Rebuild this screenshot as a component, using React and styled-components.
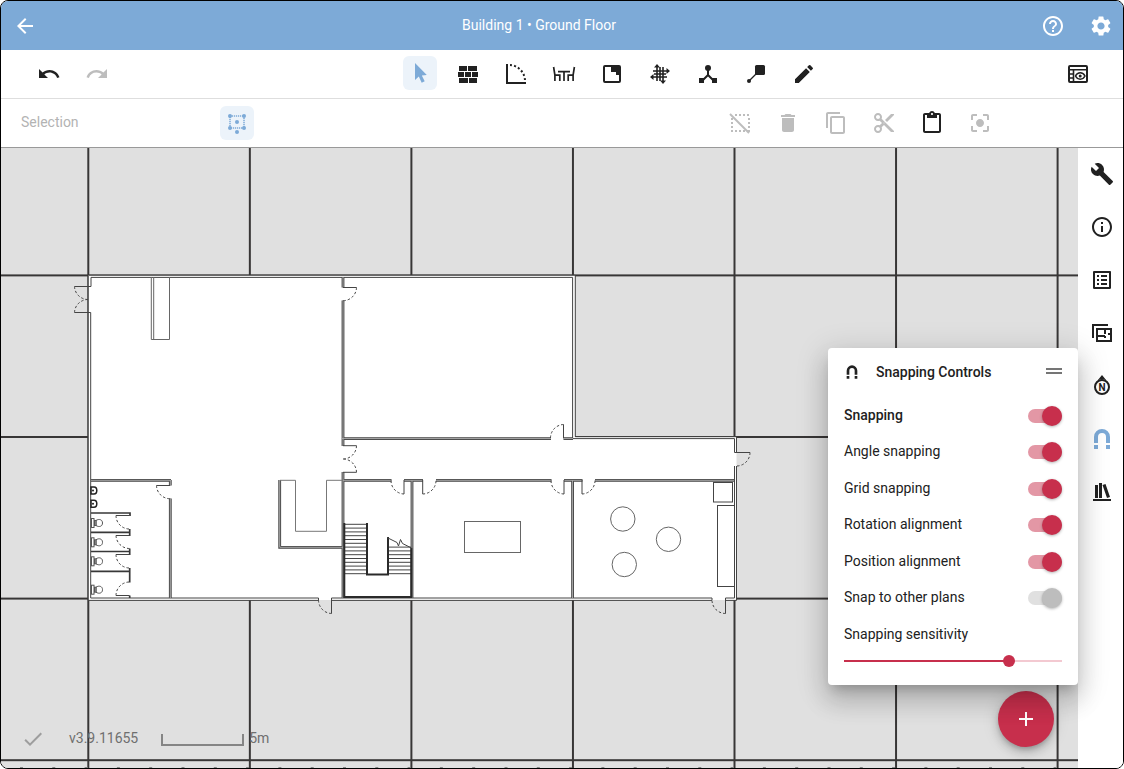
import React, { useState } from 'react';
import styled, { createGlobalStyle } from 'styled-components';
import {
	MdAdd,
	MdArrowBack,
	MdBuild,
	MdCenterFocusStrong,
	MdCheck,
	MdContentCopy,
	MdContentCut,
	MdContentPaste,
	MdCreate,
	MdDelete,
	MdDragHandle,
	MdHelpOutline,
	MdInfoOutline,
	MdListAlt,
	MdRedo,
	MdSettings,
	MdUndo,
} from 'react-icons/md';

const BLUE = '#7daad7';
const RED = '#c72f4c';
const INK = '#212121';

const GlobalStyle = createGlobalStyle`
	* {
		box-sizing: border-box;
	}
	body {
		margin: 0;
		background: white;
		color: ${INK};
		font-family: Roboto, 'Liberation Sans', sans-serif;
		font-size: 14px;
	}
	button {
		font: inherit;
		border: 0;
		padding: 0;
		background: none;
		color: inherit;
	}
`;

const Frame = styled.div`
	display: flex;
	flex-direction: column;
	height: 100vh;
	border: 1px solid black;
	border-radius: 8px;
	overflow: hidden;
`;

const Header = styled.header`
	display: flex;
	align-items: center;
	gap: 4px;
	height: 49px;
	padding-left: 2px;
	flex: none;
	background: ${BLUE};
	color: white;
	&& > h1 {
		flex: 1;
		margin: 0;
		padding-bottom: 1px;
		text-align: center;
		font-size: 14px;
		font-weight: 400;
	}
`;

const HeaderButton = styled.button`
	display: grid;
	place-items: center;
	width: 44px;
	height: 48px;
`;

const Toolbar = styled.div`
	display: flex;
	align-items: center;
	justify-content: space-between;
	flex: none;
	height: 49px;
	padding: 0 28px 2px 31px;
	border-bottom: 1px solid #dedede;
`;

const SelectionBar = styled(Toolbar)`
	padding: 0 126px 0 20px;
	border-bottom-color: #999;
	&& > span {
		width: 199px;
		color: #b3b3b3;
		padding-bottom: 2px;
	}
	&& > div {
		margin-left: auto;
	}
`;

const ToolGroup = styled.div`
	display: flex;
	gap: 14px;
	min-width: ${(props) => (props.$wide ? '130px' : '0')};
`;

const ToolButton = styled.button`
	display: grid;
	place-items: center;
	width: 34px;
	height: 34px;
	padding-top: ${(props) => (props.$low ? '2px' : '0')};
	border-radius: 6px;
	color: ${(props) => (props.$active ? BLUE : INK)};
	background: ${(props) => (props.$active ? '#ecf3fa' : 'none')};
	&:disabled {
		color: #bdbdbd;
	}
`;

const Workspace = styled.main`
	display: flex;
	flex: 1;
	min-height: 0;
`;

const Canvas = styled.section`
	position: relative;
	z-index: 1;
	flex: 1;
	background: #e0e0e0;
	&& > svg {
		position: absolute;
		inset: 0;
		width: 100%;
		height: 100%;
	}
`;

const SideBar = styled.nav`
	display: flex;
	flex-direction: column;
	width: 45px;
	background: white;
`;

const SideButton = styled.button`
	display: grid;
	place-items: center;
	height: 53px;
	padding: 0 0 2px 3px;
	color: ${(props) => (props.$active ? BLUE : INK)};
`;

const StatusLine = styled.div`
	position: absolute;
	left: 20px;
	bottom: 17px;
	display: flex;
	align-items: center;
	height: 24px;
	color: #6f6f6f;
	&& > svg {
		color: #9e9e9e;
		margin-right: 24px;
	}
	&& > span {
		padding-bottom: 2px;
	}
`;

const ScaleBar = styled.div`
	width: 83px;
	height: 12px;
	margin: 2px 5px 0 23px;
	border: 2px solid #858585;
	border-top: 0;
`;

const AddButton = styled.button`
	position: absolute;
	right: 24px;
	bottom: 21px;
	display: grid;
	place-items: center;
	width: 56px;
	height: 56px;
	border-radius: 50%;
	background: ${RED};
	color: white;
	box-shadow: 0 3px 5px -1px rgba(0, 0, 0, 0.2),
		0 6px 10px rgba(0, 0, 0, 0.14), 0 1px 18px rgba(0, 0, 0, 0.12);
`;

const Panel = styled.aside`
	position: absolute;
	right: 0;
	bottom: 83px;
	width: 250px;
	padding: 0 16px 16px;
	border-radius: 4px;
	background: white;
	box-shadow: 0 8px 10px -5px rgba(0, 0, 0, 0.2),
		0 16px 24px 2px rgba(0, 0, 0, 0.14), 0 6px 30px 5px rgba(0, 0, 0, 0.12);
`;

const PanelHeader = styled.div`
	display: flex;
	align-items: center;
	height: 49px;
	padding-bottom: 1px;
	&& > h2 {
		flex: 1;
		margin: 0 0 0 16px;
		font-size: 14px;
		font-weight: 500;
	}
	&& > button {
		height: 24px;
		width: 24px;
		margin: 0 -4px 2px 0;
		color: #757575;
	}
`;

const SwitchList = styled.div`
	display: grid;
	grid-auto-rows: 1fr;
	height: 219px;
`;

const SwitchRow = styled.label`
	display: flex;
	align-items: center;
	justify-content: space-between;
	font-weight: ${(props) => (props.$strong ? 500 : 400)};
	&& > span {
		padding-bottom: 1px;
	}
`;

const Switch = styled.input`
	appearance: none;
	display: flex;
	align-items: center;
	justify-content: flex-end;
	width: 34px;
	height: 14px;
	margin: 1px 0 0;
	border-radius: 7px;
	background: ${(props) => (props.disabled ? '#e0e0e0' : '#e397a5')};
	&::before {
		content: '';
		flex: none;
		width: 20px;
		height: 20px;
		border-radius: 50%;
		background: ${(props) => (props.disabled ? '#bdbdbd' : RED)};
		box-shadow: 0 1px 3px rgba(0, 0, 0, 0.3);
	}
	&:not(:checked):not(:disabled) {
		justify-content: flex-start;
		background: #bdbdbd;
	}
`;

const SliderField = styled.label`
	display: flex;
	flex-direction: column;
	gap: 11px;
	padding-top: 10px;
	line-height: 16px;
`;

const Slider = styled.input`
	appearance: none;
	width: 100%;
	height: 16px;
	margin: 0;
	background: linear-gradient(${RED}, ${RED}) left center no-repeat,
		linear-gradient(#f3c9d1, #f3c9d1) center no-repeat;
	background-size: ${(props) => props.value}% 2px, 100% 2px;
	&::-webkit-slider-thumb {
		appearance: none;
		width: 12px;
		height: 12px;
		border-radius: 50%;
		background: ${RED};
	}
`;

function Icon({ children, size = 24 }) {
	return (
		<svg
			width={size}
			height={size}
			viewBox="0 0 24 24"
			fill="currentColor"
			aria-hidden="true"
		>
			{children}
		</svg>
	);
}

const line = { fill: 'none', stroke: 'currentColor', strokeWidth: 2 };

const CursorIcon = () => (
	<Icon>
		<path d="M7 1v17l3.800-3.400 2.900 6.100 3-1.400-2.900-5.800 5-.5z" />
	</Icon>
);

const WallIcon = () => (
	<Icon>
		<path d="M3 4h8v5H3zM12 4h9v5h-9zM2 10h6v5H2zM9 10h6v5H9zM16 10h6v5h-6zM3 16h9v5H3zM13 16h8v5h-8z" />
	</Icon>
);

const DoorIcon = () => (
	<Icon>
		<path d="M3 2v19h19" {...line} />
		<path d="M6 3a16 16 0 0 1 15 16" {...line} strokeDasharray="2 2.2" />
	</Icon>
);

const FurnitureIcon = () => (
	<Icon>
		<path
			d="M1.6 5l1.300 8v6M3 13.200h4.800V19M22.400 5l-1.300 8v6M21 13.200h-4.800V19M6 9.700h12M12 10v9"
			{...line}
			strokeWidth="1.7"
		/>
	</Icon>
);

const RoomIcon = () => (
	<Icon>
		<rect x="4" y="4" width="16" height="16" rx="1" {...line} />
		<path d="M11 4h9v9h-4v-3h-5z" />
	</Icon>
);

const GridIcon = () => (
	<Icon>
		<path
			d="M9 4v15M15 5v15M5 9h15M4 15h15M6 12h12M12 5v14"
			{...line}
			strokeWidth="1.6"
		/>
		<path d="M9 2l3 3.500H6zM15 22l-3-3.500h6zM22 9l-3.500-3v6zM2 15l3.500-3v6z" />
	</Icon>
);

const NetworkIcon = () => (
	<Icon>
		<circle cx="12" cy="6" r="3" />
		<path d="M12 8v6M12 13l-6 6M12 13l6 6" {...line} />
		<path d="M3 16h5v5H3zM16 16h5v5h-5z" />
	</Icon>
);

const LabelIcon = () => (
	<Icon>
		<rect x="11" y="3" width="10" height="10" rx="1.5" />
		<path d="M5 19l8-8" {...line} strokeWidth="1.2" />
		<circle cx="5" cy="19" r="2" />
	</Icon>
);

const TableEyeIcon = () => (
	<Icon>
		<rect x="3" y="4" width="18" height="16" rx="1" {...line} />
		<path d="M3 7.800h18M7.500 8v12M3 12h5M3 16h5" {...line} strokeWidth="1.6" />
		<path
			d="M9.500 14c2-4.200 7.500-4.200 9.500 0-2 4.200-7.500 4.200-9.500 0z"
			{...line}
			strokeWidth="1.5"
		/>
		<circle cx="14.200" cy="14" r="1.5" />
	</Icon>
);

const TransformIcon = () => (
	<Icon>
		<path
			d="M5 5h14v12H5z"
			{...line}
			strokeWidth="1.5"
			strokeDasharray="1.2 0.8"
		/>
		<circle cx="5" cy="5" r="2" />
		<circle cx="19" cy="5" r="2" />
		<circle cx="5" cy="17" r="2" />
		<circle cx="19" cy="17" r="2" />
		<circle cx="12" cy="11" r="2" />
		<circle cx="12" cy="21" r="2" />
	</Icon>
);

const DeselectIcon = () => (
	<Icon>
		<path d="M7 4h15M21 7v15M3 20h17M4 7v15" {...line} strokeDasharray="2 2" />
		<path d="M2 3l19 19" {...line} />
	</Icon>
);

const PlansIcon = () => (
	<Icon>
		<path
			d="M3 17V4h15M7 8h14v12H7zM12 14v2M7 15h8M15 8v5M15 15v2M18 13h3"
			{...line}
		/>
	</Icon>
);

const NorthIcon = () => (
	<Icon>
		<circle cx="12" cy="13" r="7" {...line} />
		<path d="M12 1l4.500 5.500a9 9 0 0 0-9 0z" />
		<text
			x="12"
			y="17"
			textAnchor="middle"
			fontFamily="Roboto, sans-serif"
			fontSize="10"
			fontWeight="700"
		>
			N
		</text>
	</Icon>
);

const MagnetIcon = ({ size }) => (
	<Icon size={size}>
		<path d="M6 16v-6a6 6 0 0 1 12 0v6" {...line} strokeWidth="4" />
		<path d="M4 18h4v4H4zM16 18h4v4h-4z" />
	</Icon>
);

const LibraryIcon = () => (
	<Icon>
		<path d="M3 19h18v2H3zM5 5h3v13H5zM9 3h3v15H9zM12.500 5l3-1 4.500 13-3 1z" />
	</Icon>
);

// Hinge side first, then the leaf end and the point where the swing meets the wall.
const doors = [
	[88, 286.5, 74.5, 286.5, 88, 299.5],
	[88, 312.5, 74.5, 312.5, 88, 299.5],
	[343, 287.5, 356.5, 287.5, 343, 300.7],
	[343, 445.7, 356.5, 445.7, 343, 459],
	[343, 472.3, 356.5, 472.3, 343, 459],
	[563.5, 438, 563.5, 424.5, 550.5, 438],
	[404, 480, 404, 494, 391, 480],
	[422.7, 480, 422.7, 494, 436, 480],
	[564, 480, 564, 494, 551, 480],
	[582, 480, 582, 494, 595, 480],
	[734.5, 452.5, 750, 452.5, 736, 466],
	[331.5, 598, 331.5, 613.5, 318.5, 600],
	[725.5, 598, 725.5, 613.5, 712, 600],
	[170, 485.5, 156.5, 485.5, 170, 498.7],
	[129.5, 515.5, 116, 515.5, 129.5, 529],
	[129.5, 535.5, 116, 535.5, 129.5, 548.5],
	[129.5, 554.5, 116, 554.5, 129.5, 568],
	[129.5, 595.5, 116, 595.5, 129.5, 582],
];

const walls =
	'M343 277V287.5M343 300.5V446M343 472V598M342 438.6H551M563.5 438.6H573' +
	'M343 480.3H391.5M404 480.3H423M436 480.3H551.5M564 480.3H582.5M595 480.3H734' +
	'M412 480V598M572.6 480V598M91 480.3H171M170.3 480V485.5M170.3 498.5V598' +
	'M279.7 480V547.3H343';

const stalls =
	'M91 513H130V516M91 532.3H130M91 551.5H130M91 571.3H129.7V582.5' +
	'M129.7 529V536M129.7 548.5V555M129.7 568V571M129.7 595.5V598';

function Door({ points: [hx, hy, lx, ly, wx, wy] }) {
	const sweep = (lx - hx) * (wy - hy) - (ly - hy) * (wx - hx) > 0 ? 1 : 0;
	return (
		<>
			<path d={`M${hx} ${hy}L${lx} ${ly}`} />
			<path
				d={`M${lx} ${ly}A13.5 13.5 0 0 ${sweep} ${wx} ${wy}`}
				strokeDasharray="2.5 2"
			/>
		</>
	);
}

function FloorPlan() {
	return (
		<svg role="img" aria-label="Ground floor plan">
			<defs>
				<pattern
					id="grid"
					x="87.3"
					y="274.4"
					width="161.55"
					height="161.6"
					patternUnits="userSpaceOnUse"
				>
					<path d="M1 0V161.6M0 1H161.6" stroke="#383636" strokeWidth="2" />
				</pattern>
			</defs>
			<g transform="translate(-1 -148)" fill="none" stroke="#444">
				<rect width="4000" height="4000" fill="url(#grid)" stroke="none" />
				<path d="M20 767.5H4000" stroke="#888" strokeDasharray="3 29.3" />
				<path
					d="M88 275H575V437H736.5V600H88z"
					fill="white"
					stroke="none"
				/>
				<path d="M88.300 600V275.300H575.300V436.700H736.500V452.500M736.500 466V600.400H725.500M712 600.400H331.500M318.500 600.400H88" />
				<path d="M91 286.500H88M91 286.500V277.400H572.600V438.600H734.500V452.500M734.500 466V598H725.500V600M712 600V598H331.500V600M318.500 600V598H90.700V312.500H88" />
				<path d={walls} stroke="#444" strokeWidth="2.8" />
				<path d={walls} stroke="#aaa" strokeWidth="1" />
				<path d={stalls} stroke="#383838" strokeWidth="1.7" />
				{doors.map((points) => (
					<Door key={points.join()} points={points} />
				))}
				<g stroke="#666">
					<path d="M151.300 277V339.500H169.500V277M153.700 277V339.500" />
					<path d="M280 480.300H295.500V531.300H326.500V480.300H343" stroke="#777" />
					<rect x="464.5" y="521.5" width="56" height="31" />
					<circle cx="622.8" cy="519" r="12.2" />
					<circle cx="668.5" cy="539.3" r="12.2" />
					<circle cx="624.3" cy="564.5" r="12.2" />
				</g>
				<rect x="713.5" y="482.5" width="19" height="19.5" />
				<rect x="717.5" y="505.5" width="17" height="81" />
				{Array.from({ length: 14 }, (_, i) => (
					<path key={i} d={`M344 ${524.3 + i * 3.8}H367`} />
				))}
				{Array.from({ length: 8 }, (_, i) => (
					<path key={i} d={`M388 ${547.1 + i * 3.8}H411`} />
				))}
				<path
					d="M344.300 523V597H411.300V548M367 523V574.500H388V537"
					stroke="#2a2a2a"
					strokeWidth="2"
				/>
				<path d="M387 537.500L397 542.500L398.500 546L400.500 539.500L402.500 543.500L411.500 548" />
				{[490.5, 503.7].map((y) => (
					<g key={y} transform={`translate(91 ${y})`}>
						<path
							d="M0-3.500H3a2.800 3.500 0 0 1 0 7H0z"
							stroke="#222"
							strokeWidth="1.5"
						/>
						<circle cx="2" cy="0" r="1" fill="#222" stroke="none" />
					</g>
				))}
				{[523, 542.3, 561.3, 589.7].map((y) => (
					<g key={y} transform={`translate(91 ${y})`} stroke="#555">
						<rect x="0.5" y="-4.5" width="2.5" height="9" />
						<rect x="3.5" y="-2.5" width="1.5" height="5" />
						<path d="M5-2.500C8-4.500 11.500-3.500 11.500 0S8 4.500 5 2.500z" />
					</g>
				))}
			</g>
		</svg>
	);
}

const tools = [
	['Select', CursorIcon],
	['Walls', WallIcon],
	['Doors', DoorIcon],
	['Furniture', FurnitureIcon],
	['Rooms', RoomIcon],
	['Grid', GridIcon],
	['Network', NetworkIcon],
	['Label', LabelIcon],
	['Draw', MdCreate],
];

const actions = [
	['Deselect', DeselectIcon],
	['Delete', MdDelete],
	['Copy', MdContentCopy],
	['Cut', MdContentCut],
	['Paste', MdContentPaste, true],
	['Focus', MdCenterFocusStrong],
];

const sideTabs = [
	['Properties', MdBuild],
	['Info', MdInfoOutline],
	['List', MdListAlt],
	['Plans', PlansIcon],
	['North', NorthIcon],
	['Snapping', MagnetIcon],
	['Library', LibraryIcon],
];

const switches = [
	'Snapping',
	'Angle snapping',
	'Grid snapping',
	'Rotation alignment',
	'Position alignment',
	'Snap to other plans',
];

function SnappingPanel() {
	const [sensitivity, setSensitivity] = useState(77);
	return (
		<Panel>
			<PanelHeader>
				<MagnetIcon size={16} />
				<h2>Snapping Controls</h2>
				<button aria-label="Move panel">
					<MdDragHandle size={24} />
				</button>
			</PanelHeader>
			<SwitchList>
				{switches.map((name, index) => (
					<SwitchRow key={name} $strong={index === 0}>
						<span>{name}</span>
						<Switch
							type="checkbox"
							role="switch"
							defaultChecked
							disabled={name === 'Snap to other plans'}
						/>
					</SwitchRow>
				))}
			</SwitchList>
			<SliderField>
				Snapping sensitivity
				<Slider
					type="range"
					min="0"
					max="100"
					value={sensitivity}
					onChange={(e) => setSensitivity(e.target.value)}
				/>
			</SliderField>
		</Panel>
	);
}

export default function App() {
	const [tool, setTool] = useState('Select');
	const [tab, setTab] = useState('Snapping');

	return (
		<>
			<GlobalStyle />
			<Frame>
				<Header>
					<HeaderButton aria-label="Back">
						<MdArrowBack size={24} />
					</HeaderButton>
					<h1>Building 1 • Ground Floor</h1>
					<HeaderButton aria-label="Help">
						<MdHelpOutline size={24} />
					</HeaderButton>
					<HeaderButton aria-label="Settings">
						<MdSettings size={24} />
					</HeaderButton>
				</Header>
				<Toolbar>
					<ToolGroup $wide>
						<ToolButton $low aria-label="Undo">
							<MdUndo size={24} />
						</ToolButton>
						<ToolButton $low aria-label="Redo" disabled>
							<MdRedo size={24} />
						</ToolButton>
					</ToolGroup>
					<ToolGroup>
						{tools.map(([name, ToolIcon]) => (
							<ToolButton
								key={name}
								$low
								aria-label={name}
								$active={name === tool}
								onClick={() => setTool(name)}
							>
								<ToolIcon size={24} />
							</ToolButton>
						))}
					</ToolGroup>
					<ToolButton $low aria-label="View options">
						<TableEyeIcon />
					</ToolButton>
				</Toolbar>
				<SelectionBar>
					<span>Selection</span>
					<ToolButton $active aria-label="Transform selection">
						<TransformIcon />
					</ToolButton>
					<ToolGroup>
						{actions.map(([name, ActionIcon, enabled]) => (
							<ToolButton key={name} aria-label={name} disabled={!enabled}>
								<ActionIcon size={24} />
							</ToolButton>
						))}
					</ToolGroup>
				</SelectionBar>
				<Workspace>
					<Canvas>
						<FloorPlan />
						<StatusLine>
							<MdCheck size={24} />
							<span>v3.9.11655</span>
							<ScaleBar />
							<span>5m</span>
						</StatusLine>
						<AddButton aria-label="Add">
							<MdAdd size={24} />
						</AddButton>
						<SnappingPanel />
					</Canvas>
					<SideBar>
						{sideTabs.map(([name, TabIcon]) => (
							<SideButton
								key={name}
								aria-label={name}
								$active={name === tab}
								onClick={() => setTab(name)}
							>
								<TabIcon size={24} />
							</SideButton>
						))}
					</SideBar>
				</Workspace>
			</Frame>
		</>
	);
}
